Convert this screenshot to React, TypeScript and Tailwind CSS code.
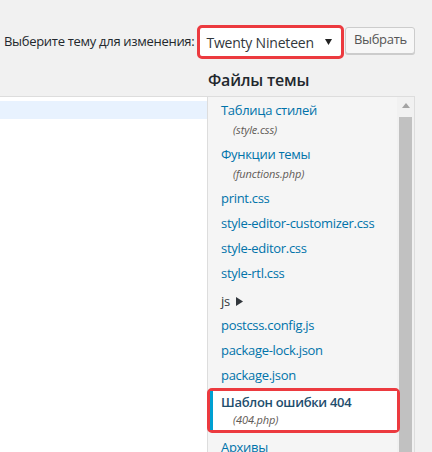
const font = "font-['Segoe_UI','Open_Sans',sans-serif]";

type FileItem = { name: string; sub?: string; dir?: boolean };

const files: FileItem[] = [
  { name: "Таблица стилей", sub: "(style.css)" },
  { name: "Функции темы", sub: "(functions.php)" },
  { name: "print.css" },
  { name: "style-editor-customizer.css" },
  { name: "style-editor.css" },
  { name: "style-rtl.css" },
  { name: "js", dir: true },
  { name: "postcss.config.js" },
  { name: "package-lock.json" },
  { name: "package.json" },
];

function FileRow({ item }: { item: FileItem }) {
  if (item.dir) {
    return (
      <li className="flex items-center gap-[6px] pl-[13px] pt-[5px] pb-[2px] leading-[20px] text-[13px] text-[#32373c]">
        <span>{item.name}</span>
        <svg width="7" height="9" viewBox="0 0 7 9">
          <path d="M0 0 L7 4.5 L0 9 Z" fill="#32373c" />
        </svg>
      </li>
    );
  }
  return (
    <li className="pl-[13px] py-[3px]">
      <div className="leading-[19px] text-[13px] text-[#0073aa]">{item.name}</div>
      {item.sub && (
        <div className="pl-[12px] leading-[19px] text-[11px] tracking-[-0.1px] italic text-[#5f5a55]">{item.sub}</div>
      )}
    </li>
  );
}

export default function App() {
  return (
    <div className={`w-[432px] h-[452px] overflow-hidden bg-[#f1f1f1] tracking-[-0.3px] ${font}`}>
      {/* theme picker */}
      <div className="flex items-center pt-[25px] pl-[4px]">
        <label className="text-[13px] text-[#23282d] mr-[3px]">Выберите тему для изменения:</label>
        <div className="border-[3px] border-[#ec3a3f] rounded-[5px] w-[147px] h-[34px] bg-white flex items-center justify-between pl-[6px] pr-[9px]">
          <span className="text-[14px] tracking-[-0.2px] text-[#32373c]">Twenty Nineteen</span>
          <svg width="7" height="6" viewBox="0 0 7 6">
            <path d="M0 0 H7 L3.5 6 Z" fill="#222" />
          </svg>
        </div>
        <button className="ml-[1px] -mt-[4px] h-[27px] w-[70px] rounded-[3px] border border-[#ccc] bg-[#f7f7f7] text-[13px] text-[#555] shadow-[0_1px_0_#ccc]">
          Выбрать
        </button>
      </div>

      <div className="grid grid-cols-[207px_208px]">
        <div />
        <h2 className="pl-[1px] pt-[11px] pb-[6px] text-[16px] leading-[20px] font-semibold tracking-[-0.2px] text-[#23282d]">Файлы темы</h2>

        {/* editor area */}
        <div className="h-[360px] bg-white border-t border-[#ddd] pt-[4px]">
          <div className="h-[18px] bg-[#e8f2fe]" />
        </div>

        {/* file list */}
        <div className="h-[360px] flex bg-[#f5f5f5] border border-[#ddd]">
          <ul className="flex-1 pt-[1px]">
            {files.map((f) => (
              <FileRow key={f.name} item={f} />
            ))}
            <li className="relative z-10 -ml-[1px] -mr-[3px] border-[3px] border-[#ec3a3f] rounded-[5px]">
              <div className="bg-white border-l-[3px] border-[#00a0d2] pl-[8px] pt-[1px] pb-[2px]">
                <div className="leading-[20px] text-[13px] font-semibold text-[#1f4e6e]">Шаблон ошибки 404</div>
                <div className="pl-[12px] leading-[16px] text-[11px] tracking-[-0.1px] italic text-[#5f5a55]">(404.php)</div>
              </div>
            </li>
            <li className="pl-[13px] pt-[5px] leading-[19px] text-[13px] text-[#0073aa]">Архивы</li>
          </ul>
          <div className="w-[17px] bg-[#f1f1f1] flex flex-col items-center">
            <svg className="mt-[6px]" width="8" height="5" viewBox="0 0 8 5">
              <path d="M0 5 L4 0 L8 5 Z" fill="#a3a3a3" />
            </svg>
            <div className="mt-[9px] w-[13px] flex-1 bg-[#c1c1c1]" />
          </div>
        </div>
      </div>
    </div>
  );
}
